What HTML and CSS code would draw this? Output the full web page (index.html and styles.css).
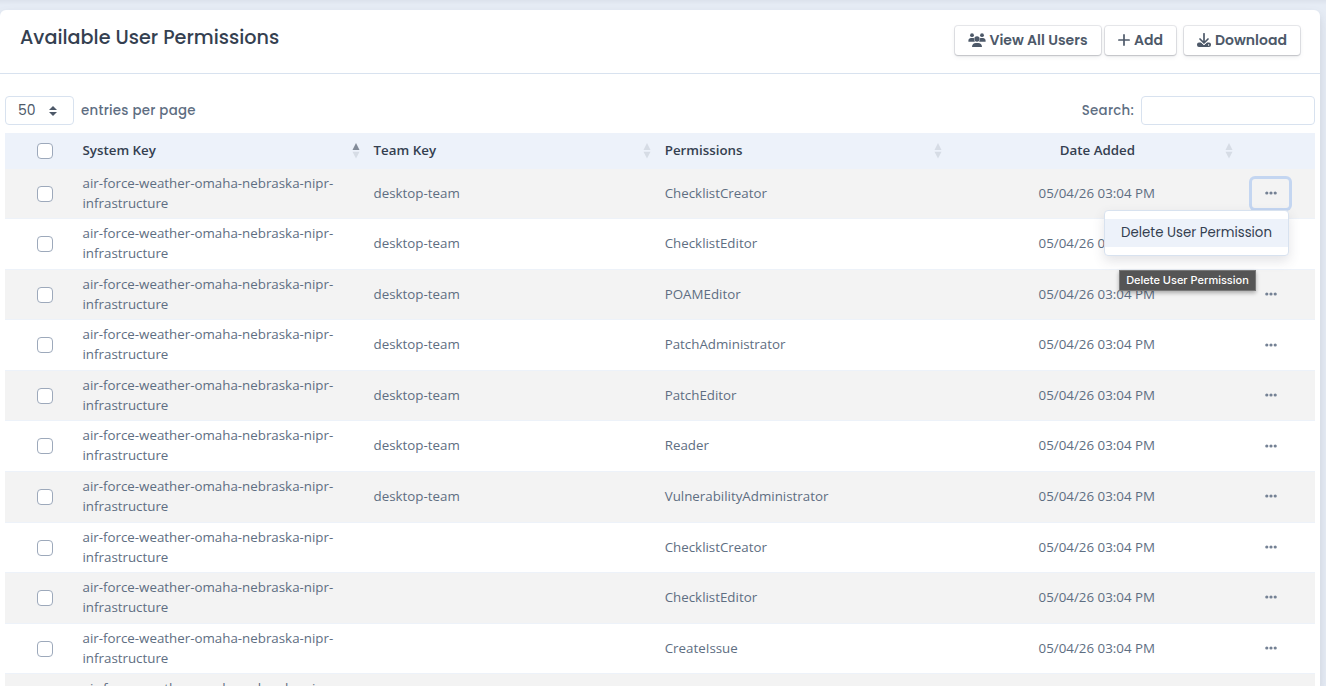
FILE: index.html
```html
<!DOCTYPE html>
<html lang="en">
<head>
<meta charset="utf-8">
<title>Available User Permissions</title>
<link rel="stylesheet" href="styles.css">
</head>
<body>
<svg class="sprite" aria-hidden="true">
  <symbol id="sort" viewBox="0 0 8 17"><path d="M4 1 L7.500 8 H.5Z"/><path d="M.5 9.800 H7.500 L4 16.500Z"/></symbol>
  <symbol id="dots" viewBox="0 0 12 4"><circle cx="1.8" cy="2" r="1.6"/><circle cx="6" cy="2" r="1.6"/><circle cx="10.2" cy="2" r="1.6"/></symbol>
</svg>
<div class="previous"></div>
<main class="card">
  <header class="card-header">
    <h1 class="title">Available User Permissions</h1>
    <div class="actions">
      <button class="btn users"><svg width="18" height="15" viewBox="0 0 18 15"><circle cx="4" cy="2.2" r="1.9"/><circle cx="14" cy="2.2" r="1.9"/><circle cx="9" cy="6" r="2.7"/><path d="M.4 8.7V7.6C.4 6 1.6 5 3 5h1.9c.4 0 .8.1 1.1.3-.2 1.3.2 2.500 1 3.400ZM17.600 8.700V7.600c0-1.600-1.200-2.600-2.600-2.600h-1.900c-.4 0-.8.1-1.100.3.2 1.300-.2 2.500-1 3.400ZM4 14c0-2.500 1.600-4 4-4h2c2.400 0 4 1.500 4 4Z"/></svg><span>View All Users</span></button>
      <button class="btn add"><svg width="12" height="12" viewBox="0 0 12 12"><path class="line" d="M6 .9v10.200M.9 6h10.200"/></svg><span>Add</span></button>
      <button class="btn download"><svg width="14" height="15" viewBox="0 0 14 15"><path d="M2 9.500h2l3 2.500 3-2.500h2a2 2 0 0 1 2 2v.5a2 2 0 0 1-2 2H2a2 2 0 0 1-2-2v-.5a2 2 0 0 1 2-2Z"/><path class="halo" d="M3 6.500 7 10.500 11 6.500"/><path class="line" d="M7 .8v9M3 6 7 10 11 6"/><circle class="led" cx="11.600" cy="12" r=".7"/></svg><span>Download</span></button>
    </div>
  </header>
  <div class="toolbar">
    <div class="length"><div class="select"><span>50</span><svg width="8" height="10" viewBox="0 0 8 10"><path d="M4 0 8 4H0ZM0 6h8L4 10Z"/></svg></div><span class="label">entries per page</span></div>
    <label class="search"><span class="label">Search:</span><input class="search-input" type="text"></label>
  </div>
  <div class="table">
    <div class="row head">
      <div class="check"><i class="box"></i></div>
      <div class="cell"><span>System Key</span><svg class="sort" viewBox="0 0 8 17"><path class="active" d="M4 1 L7.500 8 H.5Z"/><path d="M.5 9.800 H7.500 L4 16.500Z"/></svg></div>
      <div class="cell"><span>Team Key</span><svg class="sort"><use href="#sort"/></svg></div>
      <div class="cell"><span>Permissions</span><svg class="sort"><use href="#sort"/></svg></div>
      <div class="cell date"><span>Date Added</span><svg class="sort"><use href="#sort"/></svg></div>
      <div></div>
    </div>
    <div class="row odd"><div class="check"><i class="box"></i></div><div class="cell">air-force-weather-omaha-nebraska-nipr-infrastructure</div><div class="cell">desktop-team</div><div class="cell">ChecklistCreator</div><div class="cell date">05/04/26 03:04 PM</div>
      <div class="more"><button class="dots focused"><svg><use href="#dots"/></svg></button>
        <div class="menu"><div class="menu-item">Delete User Permission</div></div>
        <div class="tooltip">Delete User Permission</div>
      </div>
    </div>
    <div class="row"><div class="check"><i class="box"></i></div><div class="cell">air-force-weather-omaha-nebraska-nipr-infrastructure</div><div class="cell">desktop-team</div><div class="cell">ChecklistEditor</div><div class="cell date">05/04/26 03:04 PM</div><div class="more"></div></div>
    <div class="row odd"><div class="check"><i class="box"></i></div><div class="cell">air-force-weather-omaha-nebraska-nipr-infrastructure</div><div class="cell">desktop-team</div><div class="cell">POAMEditor</div><div class="cell date">05/04/26 03:04 PM</div><div class="more"><button class="dots"><svg><use href="#dots"/></svg></button></div></div>
    <div class="row"><div class="check"><i class="box"></i></div><div class="cell">air-force-weather-omaha-nebraska-nipr-infrastructure</div><div class="cell">desktop-team</div><div class="cell">PatchAdministrator</div><div class="cell date">05/04/26 03:04 PM</div><div class="more"><button class="dots"><svg><use href="#dots"/></svg></button></div></div>
    <div class="row odd"><div class="check"><i class="box"></i></div><div class="cell">air-force-weather-omaha-nebraska-nipr-infrastructure</div><div class="cell">desktop-team</div><div class="cell">PatchEditor</div><div class="cell date">05/04/26 03:04 PM</div><div class="more"><button class="dots"><svg><use href="#dots"/></svg></button></div></div>
    <div class="row"><div class="check"><i class="box"></i></div><div class="cell">air-force-weather-omaha-nebraska-nipr-infrastructure</div><div class="cell">desktop-team</div><div class="cell">Reader</div><div class="cell date">05/04/26 03:04 PM</div><div class="more"><button class="dots"><svg><use href="#dots"/></svg></button></div></div>
    <div class="row odd"><div class="check"><i class="box"></i></div><div class="cell">air-force-weather-omaha-nebraska-nipr-infrastructure</div><div class="cell">desktop-team</div><div class="cell">VulnerabilityAdministrator</div><div class="cell date">05/04/26 03:04 PM</div><div class="more"><button class="dots"><svg><use href="#dots"/></svg></button></div></div>
    <div class="row"><div class="check"><i class="box"></i></div><div class="cell">air-force-weather-omaha-nebraska-nipr-infrastructure</div><div class="cell"></div><div class="cell">ChecklistCreator</div><div class="cell date">05/04/26 03:04 PM</div><div class="more"><button class="dots"><svg><use href="#dots"/></svg></button></div></div>
    <div class="row odd"><div class="check"><i class="box"></i></div><div class="cell">air-force-weather-omaha-nebraska-nipr-infrastructure</div><div class="cell"></div><div class="cell">ChecklistEditor</div><div class="cell date">05/04/26 03:04 PM</div><div class="more"><button class="dots"><svg><use href="#dots"/></svg></button></div></div>
    <div class="row"><div class="check"><i class="box"></i></div><div class="cell">air-force-weather-omaha-nebraska-nipr-infrastructure</div><div class="cell"></div><div class="cell">CreateIssue</div><div class="cell date">05/04/26 03:04 PM</div><div class="more"><button class="dots"><svg><use href="#dots"/></svg></button></div></div>
    <div class="row odd"><div class="check"></div><div class="cell">air-force-weather-omaha-nebraska-nipr-infrastructure</div><div class="cell"></div><div class="cell"></div><div class="cell date"></div><div class="more"></div></div>
  </div>
</main>
</body>
</html>
```
FILE: styles.css
```css
* { box-sizing: border-box; }
body {
  margin: 0;
  height: 686px;
  overflow: hidden;
  background: #e6ecf5;
  color: #5e6e82;
  font-family: "Open Sans", "Noto Sans", sans-serif;
  font-size: 13.333px;
}
.sprite { display: none; }
.previous { height: 10px; background: linear-gradient(#dce2ec, #e6ecf5 5px); }
.card {
  width: 1320px;
  height: 676px;
  overflow: hidden;
  background: #fff;
  border-radius: 6px 6px 0 0;
  box-shadow: 0 7px 14px rgba(65, 69, 88, .1), 0 3px 6px rgba(0, 0, 0, .05);
}
.card-header {
  display: flex;
  justify-content: space-between;
  height: 64px;
  padding: 15px 20px 0 20px;
  border-bottom: 1px solid #d8e2ef;
  font-family: Poppins, Inter, sans-serif;
}
.title {
  margin: 0;
  color: #344050;
  font-size: 19.2px;
  line-height: 25px;
  font-weight: 500;
}
.actions { display: flex; align-items: flex-start; }
.btn {
  display: flex;
  align-items: center;
  justify-content: center;
  gap: 3px;
  height: 29px;
  margin-top: 1px;
  padding: 0 0 1px;
  border: 0;
  border-radius: 3px;
  background: #fff;
  color: #4d5969;
  font: 600 14px/20px Poppins, Inter, sans-serif;
  white-space: nowrap;
  box-shadow: 0 0 0 1px rgba(43, 45, 80, .1), 0 2px 5px rgba(43, 45, 80, .08), 0 1px 1.5px rgba(0, 0, 0, .07), 0 1px 2px rgba(0, 0, 0, .08);
}
.btn svg { fill: currentColor; flex: none; }
.btn .line { fill: none; stroke: currentColor; stroke-width: 1.7; stroke-linecap: round; stroke-linejoin: round; }
.btn .halo { fill: none; stroke: #fff; stroke-width: 2.5; }
.btn .led { fill: #fff; }
.users { width: 146px; margin-right: 4px; }
.add { width: 71px; margin-right: 8px; gap: 4px; }
.download { width: 116px; gap: 4px; }
.toolbar {
  display: flex;
  justify-content: space-between;
  height: 59px;
  padding: 22px 5px 8px;
  font-family: Poppins, Inter, sans-serif;
}
.length, .search { display: flex; align-items: center; gap: 7px; }
.label { font-size: 13.333px; font-weight: 500; letter-spacing: .27px; }
.select {
  display: flex;
  align-items: center;
  gap: 13px;
  width: 69px;
  height: 29px;
  padding-left: 12px;
  border: 1px solid #d8e2ef;
  border-radius: 4px;
  color: #4d5969;
  font-size: 14px;
}
.select svg { fill: #4d5969; }
.search-input {
  width: 174px;
  height: 29px;
  border: 1px solid #d8e2ef;
  border-radius: 4px;
  background: #fff;
}
.table { margin: 0 5px; }
.row {
  display: grid;
  grid-template-columns: 69.5px repeat(4, 291.1px) 1fr;
  align-items: center;
  height: 50.58px;
  border-bottom: 1px solid #edf2f9;
  line-height: 20px;
}
.odd { background: #f3f3f3; }
.head {
  height: 35.5px;
  border: 0;
  background: #edf2fa;
  color: #344050;
  font-weight: 600;
}
.cell { padding: 0 8px 1.48px; }
.head .cell { display: flex; align-items: center; justify-content: space-between; padding: 0 6px 0 8px; }
.head span { padding-bottom: 2px; }
.row:not(.head) .date { padding-left: 15px; text-align: center; }
.head .date { padding-left: 112px; }
.sort { width: 8px; height: 17px; fill: #d6dce5; }
.sort .active { fill: #828b98; }
.check { padding: .52px 0 0 32px; }
.box { display: block; width: 16px; height: 16px; border: 1px solid #9da9bb; border-radius: 4px; background: #fff; }
.more { position: relative; padding-left: 13.5px; }
.dots {
  display: grid;
  place-items: center;
  width: 37px;
  height: 29px;
  padding: 0;
  border: 0;
  border-radius: 3px;
  background: none;
}
.dots svg { width: 12px; height: 4px; margin-bottom: 1px; fill: #748194; }
.focused { box-shadow: 0 0 0 3px #c4d6f1; }
.menu {
  position: absolute;
  z-index: 2;
  top: 31px;
  right: 26px;
  width: 185px;
  height: 46px;
  padding: 8px 0;
  border: 1px solid #d8e2ef;
  border-radius: 4px;
  background: #fff;
  box-shadow: 0 5px 12px rgba(65, 69, 88, .15);
}
.menu-item {
  height: 28px;
  background: #edf2fa;
  color: #344050;
  font: 400 13.333px/27px Poppins, Inter, sans-serif;
  text-align: center;
  white-space: nowrap;
}
.tooltip {
  position: absolute;
  z-index: 3;
  top: 91px;
  right: 59px;
  width: 137px;
  height: 21px;
  border: 1px solid #777;
  background: #555;
  color: #fff;
  font: 500 11px/19px Inter, sans-serif;
  text-align: center;
  white-space: nowrap;
  box-shadow: 0 2px 4px rgba(0, 0, 0, .3);
}
```
